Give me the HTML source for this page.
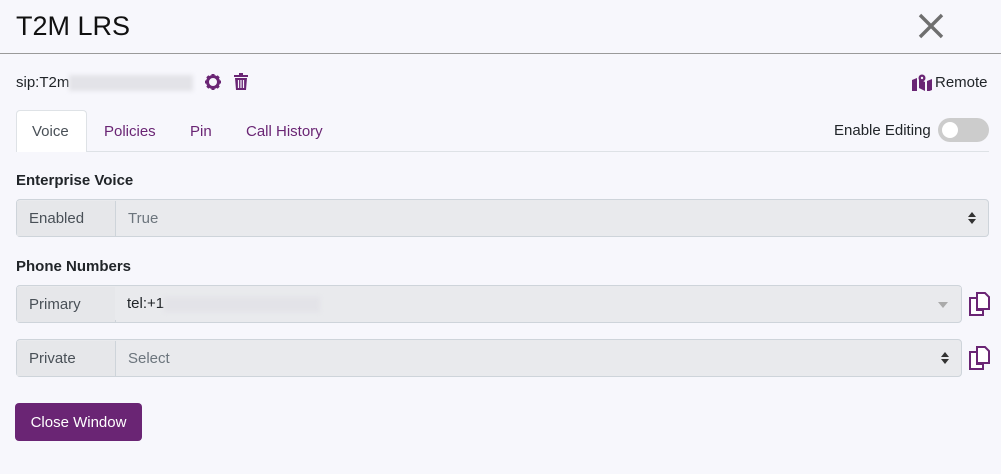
<!DOCTYPE html>
<html><head><style>
body{margin:0;width:1001px;height:474px;background:#f7f7fc;font-family:"Liberation Sans",sans-serif;color:#212529;position:relative;overflow:hidden}
.a{position:absolute}
.ig{position:absolute;left:16px;height:36px;border:1px solid #ced4da;border-radius:4px;background:#e9eaed;font-size:15px}
.ig .l{position:absolute;left:0;top:1px;bottom:0;width:86px;padding-left:12px;border-right:1px solid #ced4da;background:#e6e7ea;color:#495057;line-height:36px}
.ig .v{position:absolute;left:111px;top:1px;line-height:36px;color:#6c757d}
.blur{display:inline-block;background:#e3e3e8;filter:blur(2px);vertical-align:middle}
.tab{position:absolute;top:111px;height:41px;line-height:41px;font-size:15px;color:#6a2574}
</style></head><body>
<div class="a" style="left:16px;top:11px;font-size:27px;color:#111">T2M LRS</div>
<svg class="a" style="left:917px;top:12px" width="28" height="28" viewBox="0 0 28 28"><path d="M3 3L25 25M25 3L3 25" stroke="#6f6f6f" stroke-width="3.4"/></svg>
<div class="a" style="left:0;top:53px;width:1001px;height:1px;background:#9a9a9a"></div>
<div class="a" style="left:16px;top:74px;font-size:15px">sip:T2m<span class="blur" style="width:124px;height:16px"></span></div>
<svg class="a" style="left:205px;top:74px" width="16" height="16" viewBox="0 0 16 16"><circle cx="8" cy="8" r="5.5" fill="none" stroke="#6a2574" stroke-width="3"/><g stroke="#6a2574" stroke-width="3"><path d="M8 0v4M8 12v4M0 8h4M12 8h4M2.3 2.3l2.5 2.5M11.2 11.2l2.5 2.5M2.3 13.7l2.5-2.5M11.2 4.8l2.5-2.5"/></g></svg>
<svg class="a" style="left:234px;top:73px" width="14" height="17" viewBox="0 0 14 17"><path d="M0 2h14v2H0zM5 0h4v2H5zM1 5h12l-1 12H2z" fill="#6a2574"/><path d="M4.5 7v8M7 7v8M9.5 7v8" stroke="#f7f7fc" stroke-width="1.2"/></svg>
<svg class="a" style="left:912px;top:74px" width="20" height="17" viewBox="0 0 20 17"><path d="M0 6l5-2v13l-5 2zM7 5l6 3v9l-6-3zM15 7l5-2v11l-5 2z" fill="#6a2574"/><circle cx="10" cy="4" r="3.5" fill="#6a2574"/><circle cx="10" cy="4" r="1.2" fill="#f7f7fc"/></svg>
<div class="a" style="left:935px;top:74px;font-size:15px">Remote</div>
<div class="a" style="left:16px;top:151px;width:973px;height:1px;background:#dee2e6"></div>
<div class="a" style="left:16px;top:110px;width:69px;height:41px;background:#fff;border:1px solid #dee2e6;border-bottom:none;border-radius:4px 4px 0 0"></div>
<div class="tab" style="left:32px;color:#495057">Voice</div>
<div class="tab" style="left:104px">Policies</div>
<div class="tab" style="left:190px">Pin</div>
<div class="tab" style="left:246px">Call History</div>
<div class="a" style="left:834px;top:122px;font-size:15px">Enable Editing</div>
<div class="a" style="left:938px;top:118px;width:51px;height:24px;border-radius:12px;background:#ccc"><div style="position:absolute;left:4px;top:4px;width:16px;height:16px;border-radius:50%;background:#fff"></div></div>
<div class="a" style="left:16px;top:172px;font-size:15px;font-weight:bold">Enterprise Voice</div>
<div class="ig" style="top:199px;width:971px"><div class="l">Enabled</div><div class="v">True</div><svg class="a" style="right:12px;top:12px" width="8" height="12" viewBox="0 0 8 12"><path d="M0 5L4 0L8 5ZM0 7L4 12L8 7Z" fill="#333"/></svg></div>
<div class="a" style="left:16px;top:258px;font-size:15px;font-weight:bold">Phone Numbers</div>
<div class="ig" style="top:285px;width:944px"><div class="l">Primary</div><div class="v" style="left:98px;right:0;top:1px;bottom:2px;line-height:34px;background:#e9eaed;padding-left:12px;color:#212529">tel:+1<span class="blur" style="width:156px;height:15px"></span></div><svg class="a" style="right:13px;top:16px" width="10" height="6" viewBox="0 0 10 6"><path d="M0 0h10L5 6z" fill="#aaa"/></svg></div>
<div class="ig" style="top:339px;width:944px"><div class="l">Private</div><div class="v">Select</div><svg class="a" style="right:12px;top:12px" width="8" height="12" viewBox="0 0 8 12"><path d="M0 5L4 0L8 5ZM0 7L4 12L8 7Z" fill="#333"/></svg></div>
<svg class="a" style="left:968px;top:292px" width="22" height="24" viewBox="0 0 22 24"><path d="M9 1h8l4 4v12H9z" fill="#fff" stroke="#6a2574" stroke-width="2"/><path d="M2 6h7v12h6v5H2z" fill="#fff" stroke="#6a2574" stroke-width="2"/></svg>
<svg class="a" style="left:968px;top:346px" width="22" height="24" viewBox="0 0 22 24"><path d="M9 1h8l4 4v12H9z" fill="#fff" stroke="#6a2574" stroke-width="2"/><path d="M2 6h7v12h6v5H2z" fill="#fff" stroke="#6a2574" stroke-width="2"/></svg>
<div class="a" style="left:15px;top:403px;width:127px;height:38px;background:#6a2574;border-radius:4px;color:#fff;font-size:15px;line-height:40px;text-align:center">Close Window</div>
</body></html>
